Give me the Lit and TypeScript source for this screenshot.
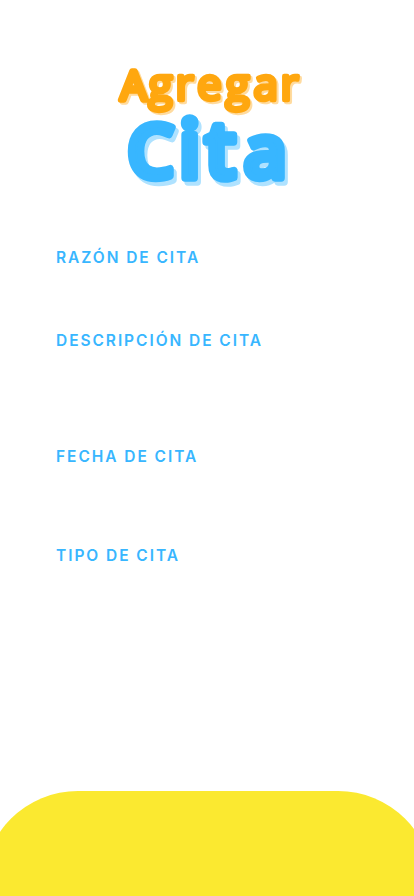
import { LitElement, html, css } from "lit";
import { customElement } from "lit/decorators.js";

@customElement("app-title")
class AppTitle extends LitElement {
  static styles = css`
    :host { display: block; height: 200px; }
    svg { display: block; width: 414px; height: 200px; overflow: visible; }
    text {
      font-family: "Open Sans", sans-serif;
      stroke-linejoin: round;
      stroke-linecap: round;
    }
    .small {
      font-size: 44px;
      font-weight: 500;
      stroke-width: 4.4px;
      fill: #ffa70f;
      stroke: #ffa70f;
      filter: drop-shadow(2px 2px 0 #ffdb9f);
    }
    .narrow { font-size: 41px; font-stretch: 88%; stroke-width: 5.4px; }
    .big {
      font-size: 75px;
      font-weight: 640;
      stroke-width: 7.4px;
      fill: #38b6ff;
      stroke: #38b6ff;
      filter: drop-shadow(3.5px 4px 0 #afe2ff);
    }
    .slim { font-stretch: 94%; }
    .tall { font-size: 80px; font-weight: 620; }
  `;
  render() {
    return html`
      <svg viewBox="0 0 414 200" role="img" aria-label="Agregar Cita">
        <text class="small" y="99.5" x="120.5 148.5 175.5 197 225.5 253.5 280.5"><tspan class="narrow">A</tspan>gregar</text>
        <text class="big" y="178" x="127 178.5 204.5 243.5"><tspan class="slim">C</tspan><tspan class="tall">it</tspan>a</text>
      </svg>
    `;
  }
}

@customElement("app-root")
class AppRoot extends LitElement {
  static styles = css`
    :host {
      display: flex;
      flex-direction: column;
      height: 896px;
      overflow: hidden;
      background: #fff;
    }
    .form {
      flex: 1;
      display: flex;
      flex-direction: column;
      padding: 48px 0 0 56px;
    }
    .label {
      font: 600 15.5px/20px "Inter", sans-serif;
      letter-spacing: 1.94px;
      color: #38b6ff;
      white-space: nowrap;
    }
    .reason { height: 83px; }
    .description { height: 116px; }
    .date { height: 99px; }
    .footer {
      flex: none;
      width: 450px;
      height: 105px;
      margin-left: -17px;
      background: #fbe930;
      border-radius: 95px 95px 0 0;
    }
  `;
  render() {
    return html`
      <app-title></app-title>
      <main class="form">
        <div class="label reason">RAZÓN DE CITA</div>
        <div class="label description">DESCRIPCIÓN DE CITA</div>
        <div class="label date">FECHA DE CITA</div>
        <div class="label">TIPO DE CITA</div>
      </main>
      <div class="footer"></div>
    `;
  }
}
